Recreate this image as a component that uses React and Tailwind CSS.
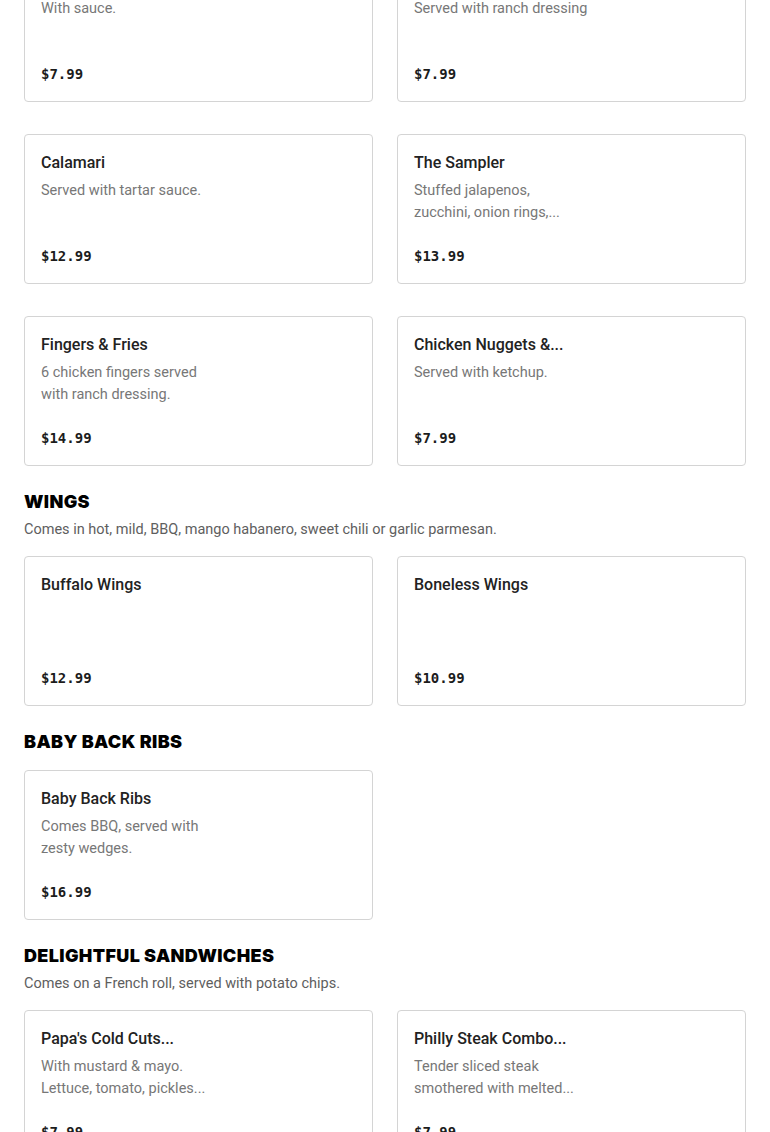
import React from 'react';

const sections = [
  {
    title: null,
    items: [
      { name: 'Mozzarella Sticks', desc: ['With sauce.'], price: '$7.99' },
      { name: 'Fried Pickles', desc: ['Served with ranch dressing'], price: '$7.99' },
      { name: 'Calamari', desc: ['Served with tartar sauce.'], price: '$12.99' },
      { name: 'The Sampler', desc: ['Stuffed jalapenos,', 'zucchini, onion rings,...'], price: '$13.99' },
      { name: 'Fingers & Fries', desc: ['6 chicken fingers served', 'with ranch dressing.'], price: '$14.99' },
      { name: 'Chicken Nuggets &...', desc: ['Served with ketchup.'], price: '$7.99' },
    ],
  },
  {
    title: 'WINGS',
    note: 'Comes in hot, mild, BBQ, mango habanero, sweet chili or garlic parmesan.',
    items: [
      { name: 'Buffalo Wings', desc: [], price: '$12.99' },
      { name: 'Boneless Wings', desc: [], price: '$10.99' },
    ],
  },
  {
    title: 'BABY BACK RIBS',
    items: [{ name: 'Baby Back Ribs', desc: ['Comes BBQ, served with', 'zesty wedges.'], price: '$16.99' }],
  },
  {
    title: 'DELIGHTFUL SANDWICHES',
    note: 'Comes on a French roll, served with potato chips.',
    items: [
      { name: "Papa's Cold Cuts...", desc: ['With mustard & mayo.', 'Lettuce, tomato, pickles...'], price: '$7.99' },
      { name: 'Philly Steak Combo...', desc: ['Tender sliced steak', 'smothered with melted...'], price: '$7.99' },
    ],
  },
];

const body = { fontFamily: 'Roboto, "Liberation Sans", sans-serif' };

const MenuCard = ({ item }) => (
  <div className="h-[150px] flex flex-col bg-white border border-[#d4d4d4] rounded px-4 pt-4 pb-[17px]">
    <h3 className="text-[16px] leading-6 font-medium text-[#222] whitespace-nowrap">{item.name}</h3>
    <div className="mt-[5px] text-[14.5px] leading-[22px] text-[#777]">
      {item.desc.map((line) => (
        <p key={line} className="whitespace-nowrap">{line}</p>
      ))}
    </div>
    <div className="mt-auto text-sm leading-5 font-bold text-[#1c1c1c]" style={{ fontFamily: '"DejaVu Sans Mono", monospace' }}>
      {item.price}
    </div>
  </div>
);

export default function App() {
  return (
    <div className="bg-white overflow-hidden h-[1132px]" style={body}>
      <div className="px-6 -mt-[48px]">
        {sections.map((s, i) => (
          <section key={i} className={i === 0 ? '' : 'mt-6'}>
            {s.title && (
              <div className={s.note ? 'pt-px mb-4' : 'pt-px mb-[17px]'}>
                <h2
                  className="text-lg leading-[22px] font-black text-black tracking-[0.02em]"
                  style={{ fontFamily: 'Inter, sans-serif' }}
                >
                  {s.title}
                </h2>
                {s.note && <p className="mt-[7px] text-[14.5px] leading-5 text-[#5e5e5e]">{s.note}</p>}
              </div>
            )}
            <div className="grid grid-cols-2 gap-x-6 gap-y-8">
              {s.items.map((it) => (
                <MenuCard key={it.name} item={it} />
              ))}
            </div>
          </section>
        ))}
      </div>
    </div>
  );
}
